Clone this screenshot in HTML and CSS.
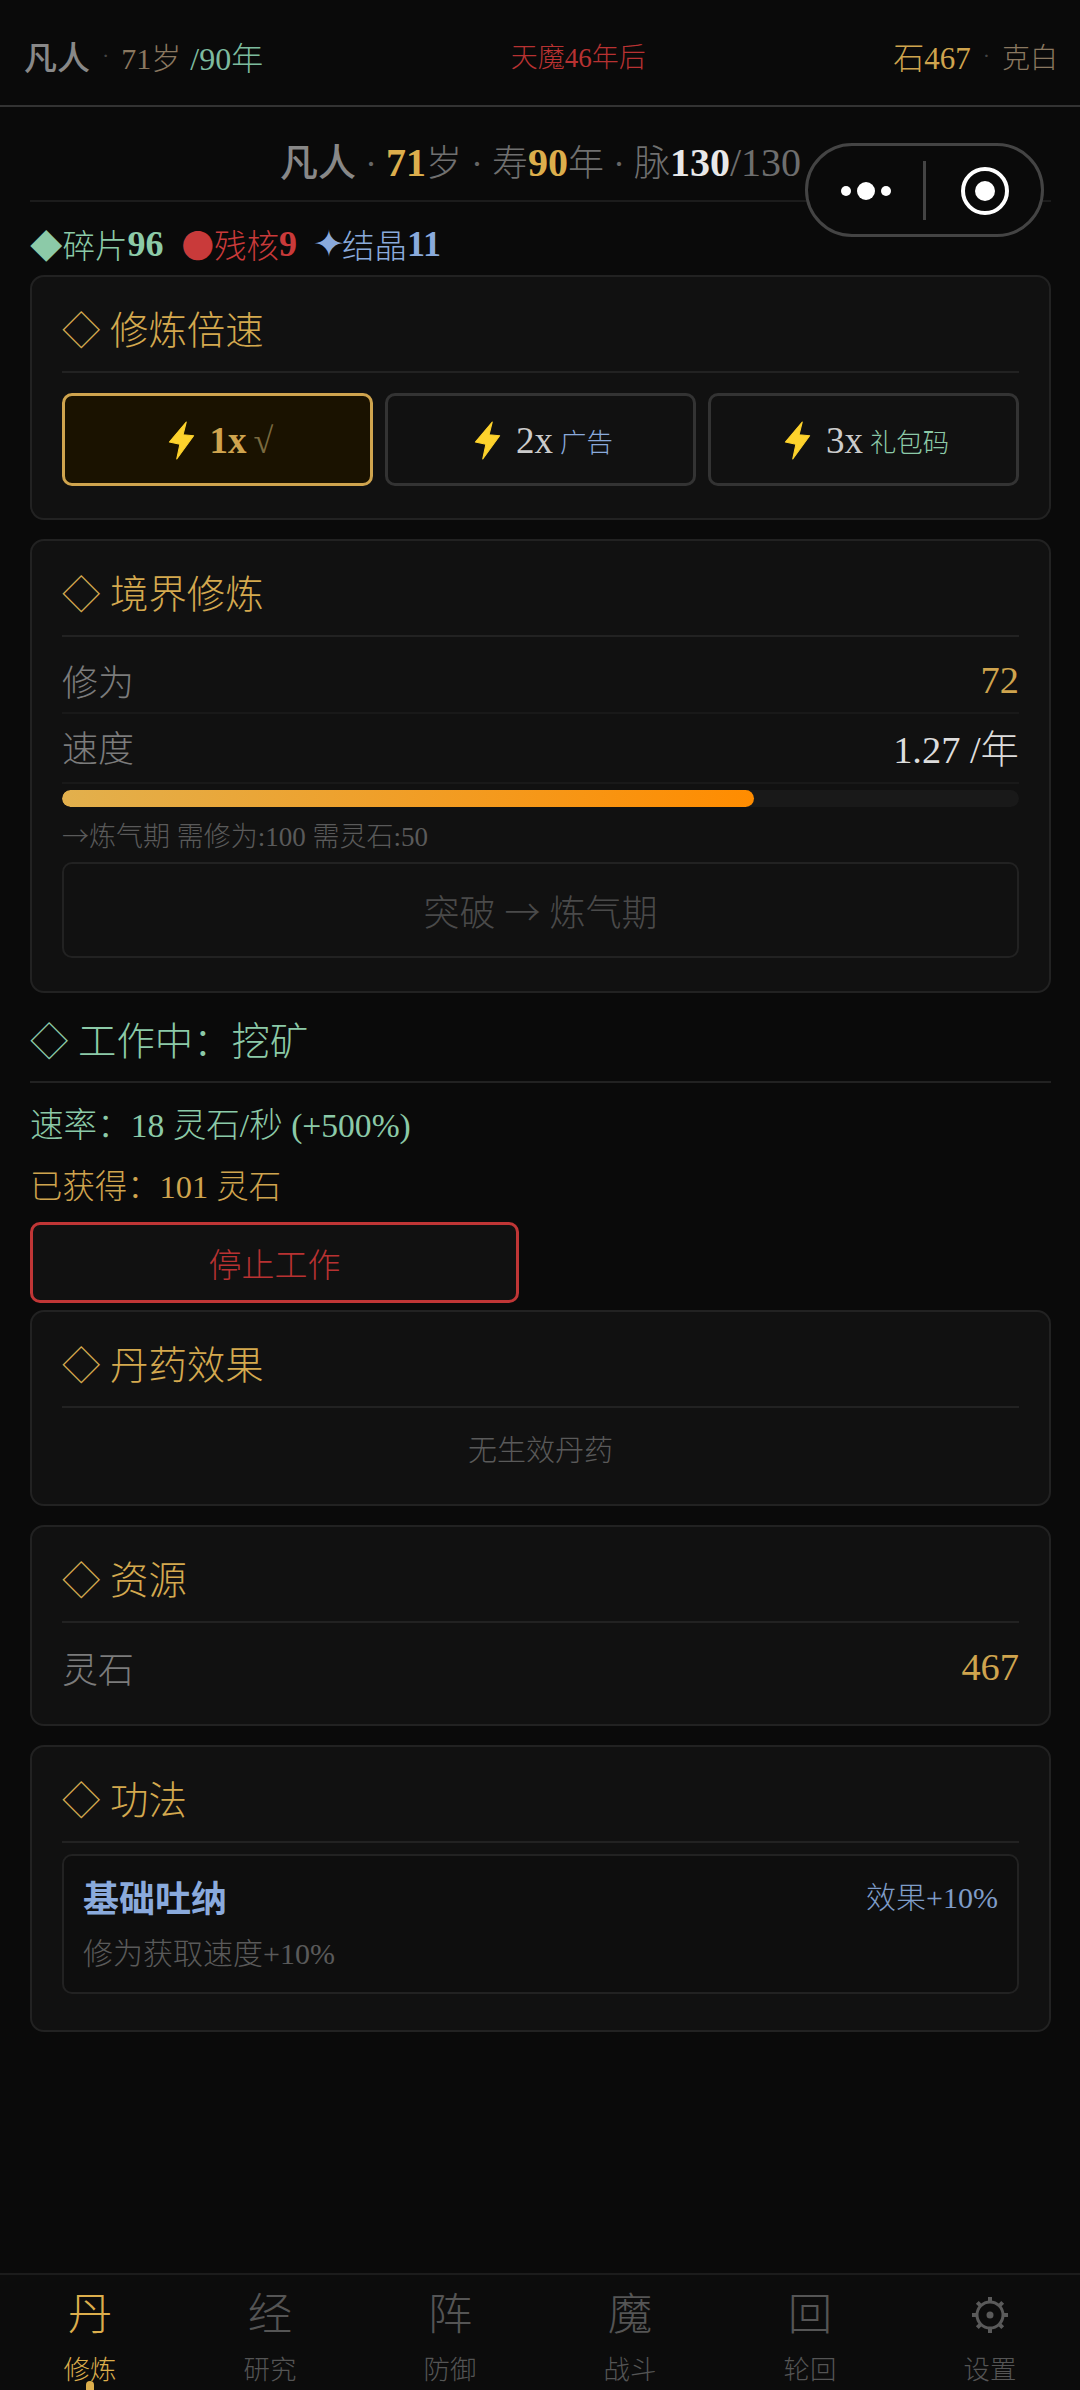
FILE: index.html
```html
<!DOCTYPE html>
<html lang="zh-CN">
<head>
<meta charset="utf-8">
<title>修炼</title>
<link rel="stylesheet" href="styles.css">
</head>
<body>
<div class="page">
  <header class="topbar">
    <div class="top-left"><span class="rank">凡人</span><span class="dot-sep">·</span><span class="dim">71岁</span><span class="green-top">/90年</span></div>
    <div class="top-mid">天魔46年后</div>
    <div class="top-right"><span class="stone">石467</span><span class="dot-sep">·</span><span class="theme">克白</span></div>
  </header>

  <main class="content">
    <div class="status"><span class="s-rank">凡人</span><span class="s-sep"> · </span><b class="s-gold">71</b><span class="s-lab">岁</span><span class="s-sep"> · </span><span class="s-lab">寿</span><b class="s-gold">90</b><span class="s-lab">年</span><span class="s-sep"> · </span><span class="s-lab">脉</span><b class="s-white">130</b><span class="s-max">/130</span></div>
    <div class="tags">
      <span class="tag green"><i class="tag-ico">◆</i>碎片<b>96</b></span>
      <span class="tag red"><i class="tag-ico">●</i>残核<b>9</b></span>
      <span class="tag blue"><i class="tag-star">✦</i>结晶<b>11</b></span>
    </div>

    <section class="card">
      <h2 class="title">◇ 修炼倍速</h2>
      <div class="speeds">
        <button class="speed active"><svg class="bolt" viewBox="0 0 25 37"><path d="M17 1 1 20l10 2-3 14 16-22-10-1z"/></svg><b>1x</b><span class="check">√</span></button>
        <button class="speed"><svg class="bolt" viewBox="0 0 25 37"><path d="M17 1 1 20l10 2-3 14 16-22-10-1z"/></svg><span>2x</span><small class="blue">广告</small></button>
        <button class="speed"><svg class="bolt" viewBox="0 0 25 37"><path d="M17 1 1 20l10 2-3 14 16-22-10-1z"/></svg><span>3x</span><small class="green">礼包码</small></button>
      </div>
    </section>

    <section class="card card-realm">
      <h2 class="title">◇ 境界修炼</h2>
      <div class="rows">
        <div class="row"><span class="r-label">修为</span><span class="r-gold">72</span></div>
        <div class="row"><span class="r-label">速度</span><span class="r-white">1.27 /年</span></div>
      </div>
      <div class="track"><div class="fill" style="width:72.3%"></div></div>
      <div class="hint"><span class="arrow">→</span>炼气期 需修为:100 需灵石:50</div>
      <button class="break">突破 <span class="arrow">→</span> 炼气期</button>
    </section>

    <section class="work">
      <h2 class="work-title">◇ 工作中：挖矿</h2>
      <p class="rate">速率：18 灵石/秒 (+500%)</p>
      <p class="earned">已获得：101 灵石</p>
      <button class="stop">停止工作</button>
    </section>

    <section class="card">
      <h2 class="title">◇ 丹药效果</h2>
      <p class="empty">无生效丹药</p>
    </section>

    <section class="card card-res">
      <h2 class="title">◇ 资源</h2>
      <div class="row last"><span class="r-label">灵石</span><span class="r-gold">467</span></div>
    </section>

    <section class="card card-skill">
      <h2 class="title">◇ 功法</h2>
      <div class="skill">
        <div class="skill-head"><b class="skill-name">基础吐纳</b><span class="skill-eff">效果+10%</span></div>
        <div class="skill-desc">修为获取速度+10%</div>
      </div>
    </section>
  </main>

  <nav class="tabs">
    <div class="tab on"><span class="t-ico">丹</span><span class="t-lab">修炼</span><i class="t-dot"></i></div>
    <div class="tab"><span class="t-ico">经</span><span class="t-lab">研究</span></div>
    <div class="tab"><span class="t-ico">阵</span><span class="t-lab">防御</span></div>
    <div class="tab"><span class="t-ico">魔</span><span class="t-lab">战斗</span></div>
    <div class="tab"><span class="t-ico">回</span><span class="t-lab">轮回</span></div>
    <div class="tab"><span class="t-ico"><svg class="gear" viewBox="0 0 44 44"><circle cx="22" cy="22" r="13"/><circle class="hub" cx="22" cy="22" r="3.5"/><path d="M22 4v5M22 35v5M4 22h5M35 22h5M9.3 9.3l3.5 3.5M31.2 31.2l3.5 3.5M9.3 34.7l3.5-3.5M31.2 12.8l3.5-3.5"/></svg></span><span class="t-lab">设置</span></div>
  </nav>

  <div class="capsule">
    <div class="cap-more"><i class="d s"></i><i class="d l"></i><i class="d s"></i></div>
    <div class="cap-line"></div>
    <div class="cap-close"><i class="core"></i></div>
  </div>
</div>
</body>
</html>
```

FILE: styles.css
```css
* { box-sizing: border-box; }
html, body { margin: 0; padding: 0; background: #0a0a0a; }
body { font-family: "Liberation Serif", "Noto Sans CJK SC", serif; font-weight: 300; }
b { font-weight: 700; }
i { font-style: normal; }
button { font-family: inherit; font-weight: 300; }
h2, p { margin: 0; font-weight: 300; }

.page { position: relative; width: 1080px; height: 2390px; overflow: hidden; display: flex; flex-direction: column; }

.topbar { height: 107px; padding: 6px 22px 0 24px; display: flex; align-items: center; justify-content: space-between; border-bottom: 2px solid #333; flex: none; }
.top-left, .top-right { display: flex; align-items: center; }
.top-mid { color: #b83232; font-size: 27px; }
.rank { font-size: 33px; color: #888; font-weight: 500; }
.dot-sep { font-size: 22px; color: #444; margin: 0 12px; }
.dim { font-size: 30px; color: #8a7860; margin-right: 9px; }
.green-top { font-size: 32px; color: #7dbb9f; }
.stone { font-size: 31px; color: #cfa44e; }
.theme { font-size: 28px; color: #8a7860; }

.content { padding: 0 29px 0 30px; flex: 1; }
.status { height: 95px; padding-top: 28px; border-bottom: 2px solid #1c1c1c; text-align: center; font-size: 40px; line-height: 56px; color: #666; white-space: nowrap; }
.s-rank { font-size: 38px; color: #888; font-weight: 500; }
.s-sep { font-size: 36px; color: #666; }
.s-lab { font-size: 36px; color: #707070; }
.s-gold { color: #dcae4c; }
.s-white { color: #e8e8e8; }
.s-max { color: #6e6e6e; }

.tags { height: 73px; display: flex; align-items: center; gap: 18px; font-size: 32.5px; padding-top: 10px; }
.tag { display: flex; align-items: center; }
.tag b { font-size: 36px; }
.tag-ico { font-family: "Noto Sans CJK SC", sans-serif; }
.tag-star { font-family: "DejaVu Sans", sans-serif; font-size: 38px; width: 27px; display: flex; justify-content: center; }
.green { color: #8ccaa8; }
.red { color: #c93a3a; }
.blue { color: #8aaadc; }

.card { background: #111; border: 2px solid #222; border-radius: 14px; padding: 30px 30px 32px; margin-bottom: 19px; }
.card-realm { padding-bottom: 33px; }
.title { font-size: 38.4px; line-height: 44px; color: #d4a94f; padding: 2px 0 18px; border-bottom: 2px solid #222; }

.speeds { display: flex; gap: 12px; margin-top: 20px; }
.speed { flex: 1; height: 93px; padding: 2px 0 0 6px; background: #111; border: 3px solid #333; border-radius: 10px; color: #ccc; font-size: 37px; display: flex; align-items: center; justify-content: center; gap: 0; }
.speed.active { background: #1a1200; border-color: #cfa44e; color: #cfa44e; }
.bolt { width: 27px; height: 39px; margin-right: 15px; }
.bolt path { fill: #fdd22c; stroke: #fdd22c; stroke-width: 1; stroke-linejoin: round; }
.speed small { font-size: 26.4px; margin-left: 7px; }
.check { margin-left: 7px; font-size: 36px; color: #7a6a3f; }

.rows { margin-top: 7px; }
.row { height: 70px; display: flex; align-items: center; justify-content: space-between; border-bottom: 2px solid #191919; font-size: 36px; padding-top: 4px; }
.row + .row { padding: 0 0 4px; }
.row.last { border-bottom: 0; margin-top: 7px; padding-top: 4px; }
.r-label { color: #7c7c7c; }
.r-gold { color: #cfa44e; font-size: 38.4px; }
.r-white { color: #ddd; font-size: 38.4px; }

.track { height: 17px; margin-top: 6px; background: #191919; border-radius: 9px; overflow: hidden; }
.fill { height: 100%; border-radius: 9px; background: linear-gradient(90deg, #e2b04d, #ff8c00); }
.hint { margin-top: 9px; font-size: 27px; line-height: 38px; color: #5a5a5a; }
.arrow { font-family: "Noto Sans CJK SC", sans-serif; }
.break { display: block; width: 100%; height: 96px; margin-top: 6px; background: #111; border: 2px solid #222; border-radius: 10px; font-size: 36px; color: #4a4a4a; }

.work { margin-top: -19px; }
.work-title { font-size: 38.4px; line-height: 44px; color: #8ccaa8; margin-top: 46px; padding-bottom: 17px; border-bottom: 2px solid #222; }
.rate { font-size: 33.6px; line-height: 42px; color: #8ccaa8; margin-top: 22px; }
.earned { font-size: 32.4px; line-height: 42px; color: #cfa44e; margin-top: 19px; }
.stop { display: block; width: 489px; height: 81px; margin: 14px 0 7px; background: #111; border: 3px solid #c03636; border-radius: 10px; color: #b83232; font-size: 33px; }

.empty { text-align: center; font-size: 29px; line-height: 40px; color: #5a5a5a; padding: 23px 0 1px; }

.card-res { padding-bottom: 24px; }
.card-skill { padding-bottom: 36px; }
.skill { margin-top: 11px; height: 140px; padding: 20px 19px 0; background: #0e0e0e; border: 2px solid #222; border-radius: 10px; }
.skill-head { display: flex; justify-content: space-between; }
.skill-name { font-size: 36px; line-height: 48px; color: #8aaadc; }
.skill-eff { font-size: 30px; line-height: 44px; color: #7f9cc8; }
.skill-desc { font-size: 30px; line-height: 40px; color: #5a5a5a; margin-top: 10px; }

.tabs { height: 117px; flex: none; display: flex; border-top: 2px solid #1c1c1c; background: #0c0c0c; }
.tab { position: relative; flex: 1; display: flex; flex-direction: column; align-items: center; color: #555; }
.tab.on { color: #dcae4c; }
.t-ico { height: 60px; margin-top: 10px; font-size: 44.5px; line-height: 60px; display: flex; align-items: center; }
.t-lab { font-size: 26.4px; line-height: 40px; margin-top: 5px; }
.t-dot { position: absolute; left: 86px; top: 106px; width: 8px; height: 12px; border-radius: 4px; background: #dcae4c; }
.gear { width: 44px; height: 44px; display: block; }
.gear circle { fill: none; stroke: #5a5a5a; stroke-width: 3; }
.gear .hub { fill: #5a5a5a; stroke: none; }
.gear path { stroke: #5a5a5a; stroke-width: 4; fill: none; }

.capsule { position: absolute; left: 805px; top: 143px; width: 239px; height: 94px; border: 3px solid #444; border-radius: 47px; background: #0a0a0a; display: flex; align-items: center; padding-top: 1px; }
.cap-more { width: 115px; display: flex; align-items: center; justify-content: center; gap: 6px; }
.d { display: block; background: #fff; border-radius: 50%; }
.d.s { width: 10px; height: 10px; }
.d.l { width: 18px; height: 18px; }
.cap-line { width: 3px; height: 59px; background: #444; }
.cap-close { width: 48px; height: 48px; margin-left: 35px; border: 4.5px solid #fff; border-radius: 50%; display: flex; align-items: center; justify-content: center; }
.core { width: 20px; height: 20px; border-radius: 50%; background: #fff; }
```
